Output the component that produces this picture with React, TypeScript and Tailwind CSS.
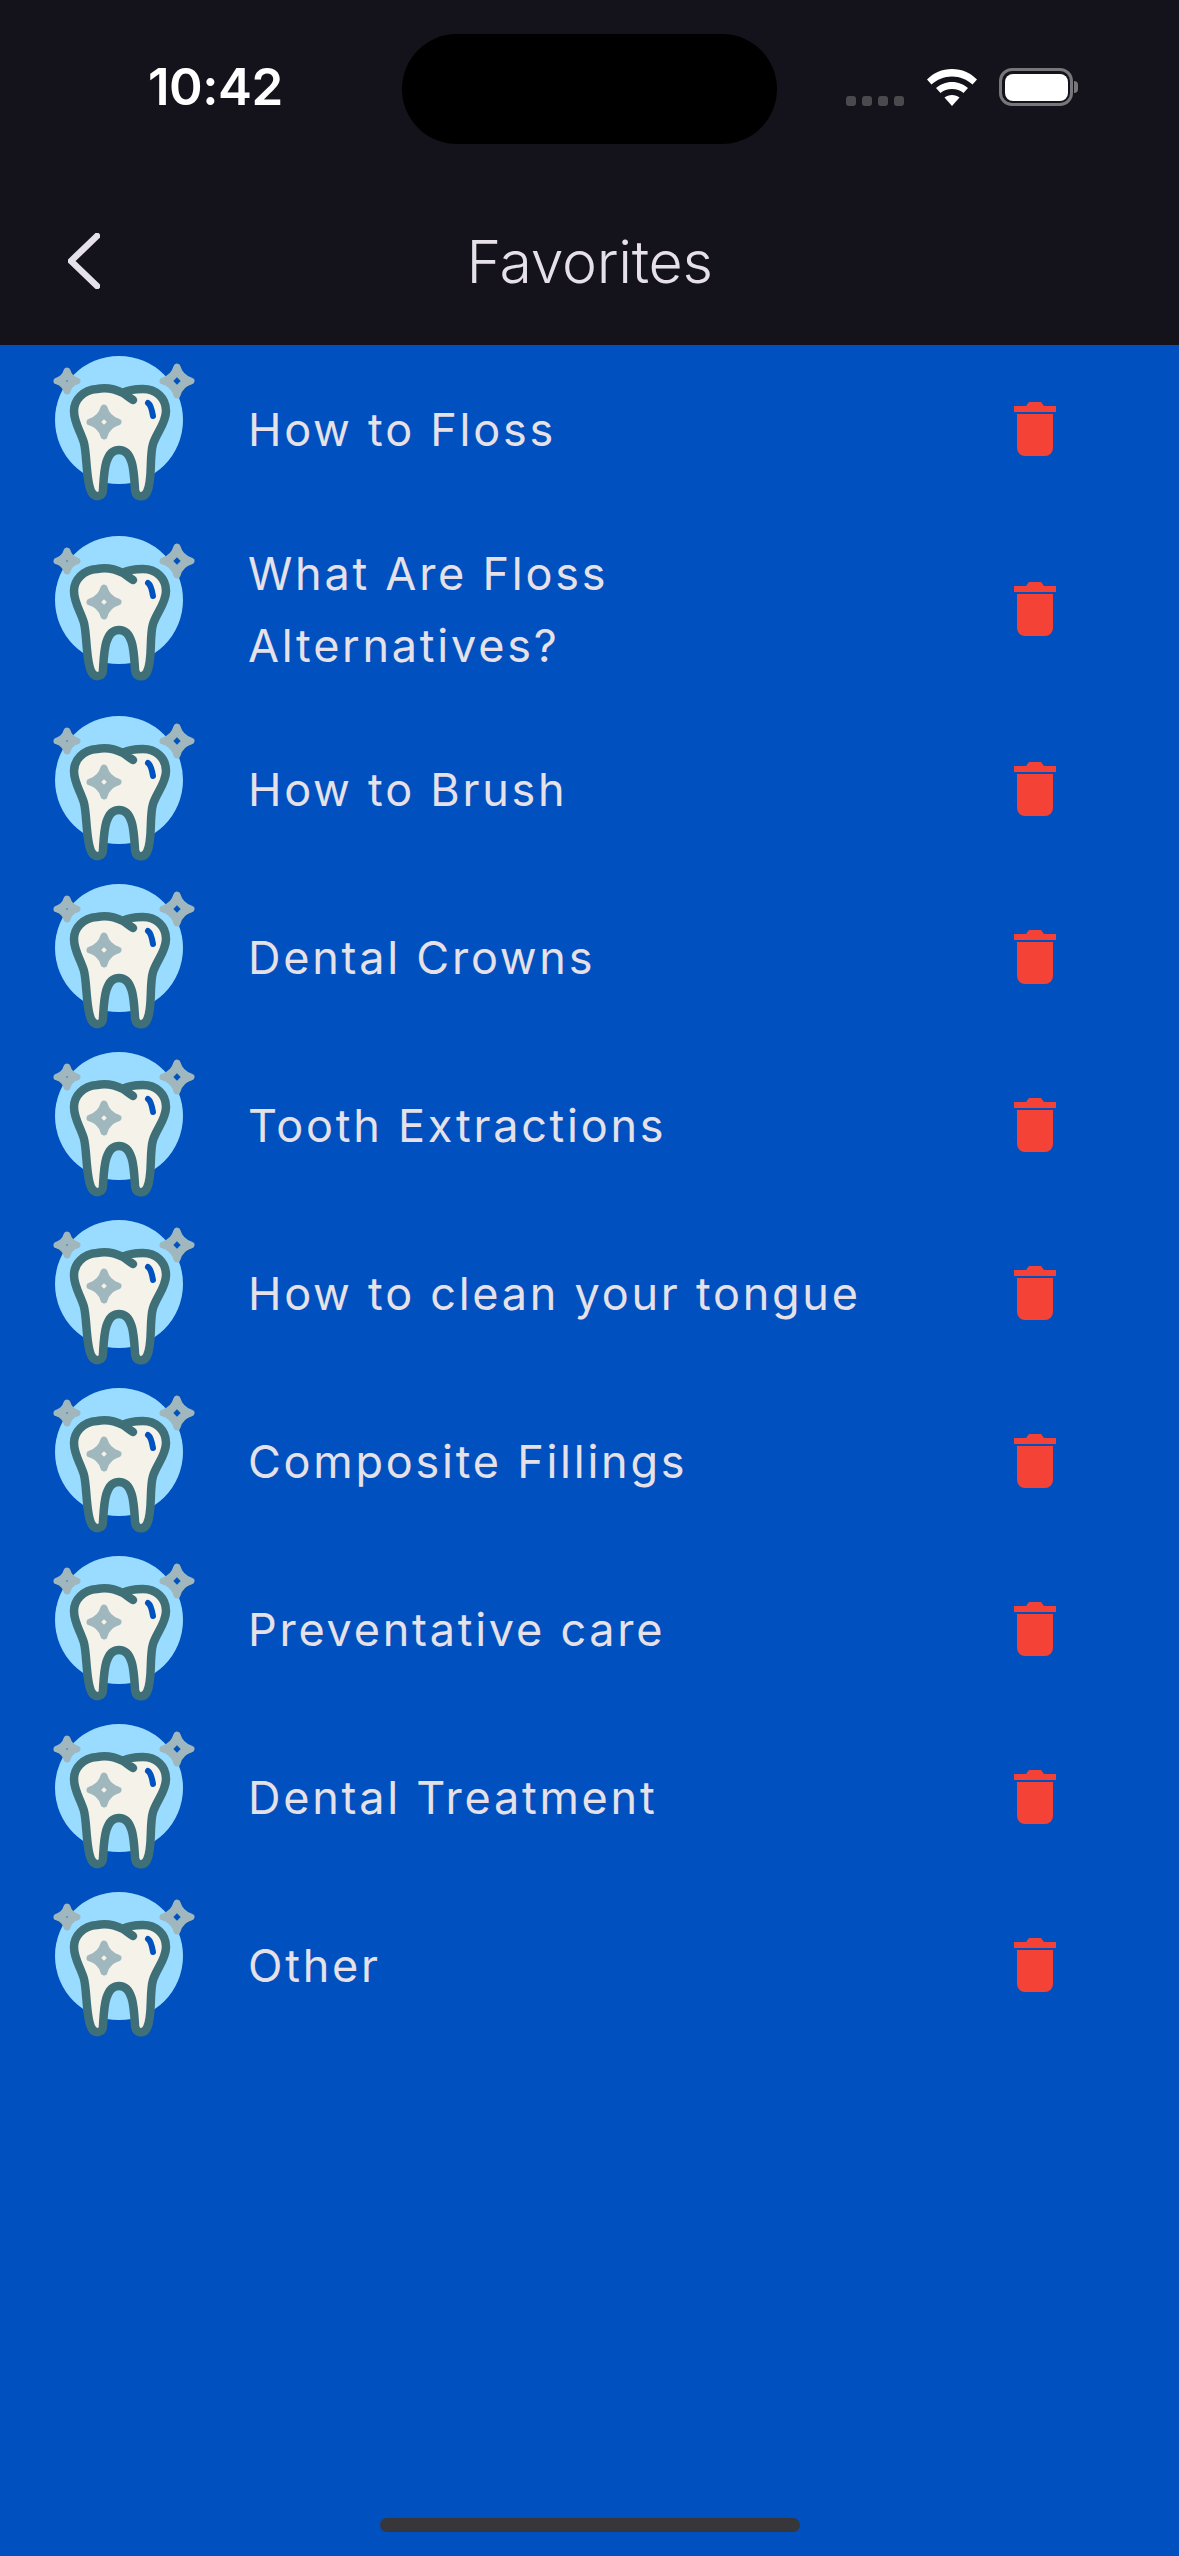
import React from 'react'

const topics = [
  'How to Floss',
  'What Are Floss Alternatives?',
  'How to Brush',
  'Dental Crowns',
  'Tooth Extractions',
  'How to clean your tongue',
  'Composite Fillings',
  'Preventative care',
  'Dental Treatment',
  'Other',
]

const Sparkle = ({ x, y, r, hole }: { x: number; y: number; r: number; hole: number }) => (
  <g>
    <path
      d={`M${x} ${y - r}Q${x + r * 0.22} ${y - r * 0.22} ${x + r} ${y}Q${x + r * 0.22} ${y + r * 0.22} ${x} ${y + r}Q${x - r * 0.22} ${y + r * 0.22} ${x - r} ${y}Q${x - r * 0.22} ${y - r * 0.22} ${x} ${y - r}Z`}
      fill="#9fb7bd"
      stroke="#9fb7bd"
      strokeWidth="7"
      strokeLinejoin="round"
    />
    <rect x={x - hole} y={y - hole} width={hole * 2} height={hole * 2} transform={`rotate(45 ${x} ${y})`} fill="currentColor" />
  </g>
)

const ToothIcon = () => (
  <svg viewBox="20 14 150 150" className="h-[150px] w-[150px] shrink-0">
    <circle cx="88" cy="80" r="64" fill="#99dcff" />
    <path
      d="M92 53C84 49 76 47 66 49C52 50 43 60 43 71C43 83 50 92 53 103C56 115 55 140 60 151C63 158 72 158 72 150C73 135 73 110 88 110C103 110 103 135 104 150C105 158 113 158 116 152C122 140 118 118 122 104C126 92 135 83 135 71C135 58 125 49 112 49C104 49 97 50 92 53C95 55 99 58 102 60"
      fill="#f5f2ea"
      stroke="#3f7078"
      strokeWidth="8.500"
      strokeLinecap="round"
      strokeLinejoin="round"
    />
    <path d="M117 63C120 65 121 70 122 76" fill="none" stroke="#0052bf" strokeWidth="6" strokeLinecap="round" />
    <g className="text-[#f5f2ea]">
      <Sparkle x={73} y={82} r={14} hole={2} />
    </g>
    <g className="text-[#0052bf]">
      <Sparkle x={36} y={41} r={10} hole={0.6} />
      <Sparkle x={146} y={41} r={14} hole={2.6} />
    </g>
  </svg>
)

const TrashIcon = () => (
  <svg viewBox="0 0 42 54" className="h-[54px] w-[42px] shrink-0" fill="#f44336">
    <path d="M0 4h12l3-4h12l3 4h12v6H0z" />
    <path d="M3 12h36v34a8 8 0 0 1-8 8H11a8 8 0 0 1-8-8z" />
  </svg>
)

const StatusBar = () => (
  <div className="flex h-[144px] items-start">
    <div className="ml-[148px] mt-[58px] w-[134px] text-[51px] font-semibold leading-[58px] tracking-[-0.5px] text-white">
      10:42
    </div>
    <div className="ml-[120px] mt-[34px] h-[110px] w-[375px] rounded-[55px] bg-black" />
    <div className="ml-[69px] mt-[96px] flex gap-[6px]">
      {[0, 1, 2, 3].map((i) => (
        <div key={i} className="h-[10px] w-[10px] rounded-[3px] bg-[#4a494e]" />
      ))}
    </div>
    <svg viewBox="0 0 50 37" className="ml-[23px] mt-[69px] h-[37px] w-[50px]" fill="#fff">
      <path d="M25 0C35 0 43.5 4 50 10.500L45.500 15.500C40 10.500 33 7.500 25 7.500C17 7.500 10 10.500 4.500 15.500L0 10.500C6.500 4 15 0 25 0Z" />
      <path d="M25 13C31.500 13 36.500 15.500 41 19L36.500 24C33.500 21.500 29.500 20 25 20C20.500 20 16.500 21.500 13.500 24L9 19C13.500 15.500 18.500 13 25 13Z" />
      <path d="M25 26C28 26 30.500 27 32.500 28.500L25 37L17.500 28.500C19.500 27 22 26 25 26Z" />
    </svg>
    <div className="ml-[22px] mt-[68px] flex items-center">
      <div className="flex h-[38px] w-[74px] items-center justify-center rounded-[13px] border-[3px] border-[#77767a]">
        <div className="h-[27px] w-[63px] rounded-[8px] bg-white" />
      </div>
      <div className="ml-[1px] h-[12px] w-[4px] rounded-r-[4px] bg-[#77767a]" />
    </div>
  </div>
)

export default function App() {
  return (
    <div className="flex h-[2556px] w-[1179px] flex-col overflow-hidden bg-[#0050bf] font-['Inter',sans-serif]">
      <header className="h-[345px] shrink-0 bg-[#14121a]">
        <StatusBar />
        <div className="relative flex h-[201px] items-start justify-center pt-[82px]">
          <svg viewBox="0 0 32 56" className="absolute left-[68px] top-[89px] h-[56px] w-[32px]" fill="none" stroke="#e6e1e9" strokeWidth="6.500" strokeLinecap="round" strokeLinejoin="round">
            <path d="M29 3L3 28L29 53" />
          </svg>
          <h1 className="text-[59px] font-light leading-[72px] tracking-[-0.3px] text-[#e6e1e9]">Favorites</h1>
        </div>
      </header>

      <ul className="flex flex-col">
        {topics.map((topic) => (
          <li key={topic} className={`flex items-center pl-[51px] ${topic.length > 26 ? 'h-[192px]' : 'h-[168px]'}`}>
            <ToothIcon />
            <span className="ml-[47px] mt-[2px] w-[640px] text-[45px] leading-[72px] tracking-[2.75px] text-[#e6e1e9]">{topic}</span>
            <div className="ml-[126px]">
              <TrashIcon />
            </div>
          </li>
        ))}
      </ul>

      <div className="mt-auto mb-[24px] h-[14px] w-[420px] self-center rounded-full bg-[#37373b]" />
    </div>
  )
}
